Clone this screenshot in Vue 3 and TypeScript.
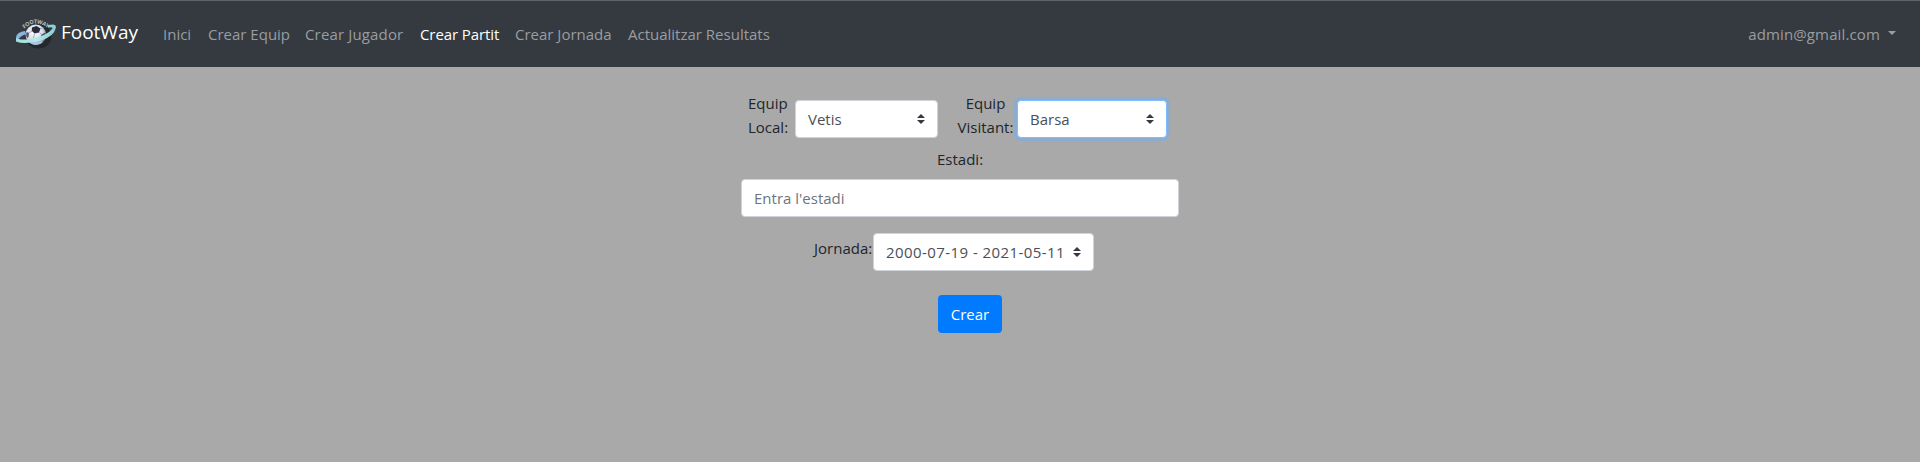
<script setup lang="ts">
import { ref } from 'vue'

interface NavItem {
  label: string
  key: string
  active?: boolean
}

const items: NavItem[] = [
  { label: 'Inici', key: 'inici' },
  { label: 'Crear Equip', key: 'equip' },
  { label: 'Crear Jugador', key: 'jugador' },
  { label: 'Crear Partit', key: 'partit', active: true },
  { label: 'Crear Jornada', key: 'jornada' },
  { label: 'Actualitzar Resultats', key: 'resultats' },
]
const local = ref('Vetis')
const visitant = ref('Barsa')
const jornada = ref('2000-07-19 - 2021-05-11')
const estadi = ref('')
</script>

<template>
  <div class="page">
    <nav class="navbar">
      <a class="brand">
        <svg class="logo" width="40" height="34" viewBox="0 0 40 34">
          <defs>
            <radialGradient id="ball" cx="42%" cy="38%" r="65%">
              <stop offset="0" stop-color="#ffffff" />
              <stop offset=".65" stop-color="#d4d9e8" />
              <stop offset="1" stop-color="#6f7a9b" />
            </radialGradient>
            <linearGradient id="ring" x1="0" x2="1">
              <stop offset="0" stop-color="#9fdde2" />
              <stop offset=".5" stop-color="#b4e9e6" />
              <stop offset="1" stop-color="#83cdd3" />
            </linearGradient>
            <path id="arc" d="M8.500 13Q19 2 32 12.500" />
          </defs>
          <ellipse cx="22.500" cy="20.500" rx="13" ry="12" fill="#25282b" />
          <path d="M9 15Q1 16 0 21L1 25Q4 20 10 18Z" fill="#8ab5de" />
          <circle cx="19.800" cy="18.800" r="10.300" fill="url(#ball)" />
          <path d="M16 11.500l4.500-1.500 4 2.500-1.500 4-4.500 1-2.800-2.700z" fill="#292c38" />
          <path d="M10.500 16l2.500 1-.5 4-1.500 1q-1.500-3-.5-6zM25.500 18.500l4-2q1 3-.5 5.500l-2.500 1-2-2z" fill="#4d5265" />
          <path d="M12.500 17l3.500-2M18.500 17.500l-1 4.500M23.500 16.500l2 2M24.500 12.500l3-.5" stroke="#8e94aa" stroke-width=".8" fill="none" />
          <path d="M32 9.500Q40 7 40 11.500 38 20.500 25 24.500 8 29 0 25.500L0 21.500Q3 24.500 14 23 31 20 36.500 12.500Q37 10.500 32 11.500Z" fill="url(#ring)" />
          <path d="M15 26.500Q20 29.500 26 26" fill="none" stroke="#a9c8ef" stroke-width="2" />
          <text class="logo-text"><textPath href="#arc" textLength="26">FOOTWAY</textPath></text>
        </svg>
        <span class="brand-name">FootWay</span>
      </a>
      <ul class="nav">
        <li v-for="item in items" :key="item.key" :class="['nav-item', item.key, { active: item.active }]">{{ item.label }}</li>
      </ul>
      <a class="user"><span class="mail">admin@gmail.com</span><i class="caret"></i></a>
    </nav>

    <form class="form" @submit.prevent>
      <div class="row teams">
        <label class="label-local">Equip<br />Local:</label>
        <div class="select select-local">
          <span>{{ local }}</span>
          <svg class="arrows" width="8" height="10" viewBox="0 0 4 5"><path d="M2 0L0 2h4zm0 5L0 3h4z" /></svg>
        </div>
        <label class="label-visitant">Equip<br />Visitant:</label>
        <div class="select select-visitant focused">
          <span>{{ visitant }}</span>
          <svg class="arrows" width="8" height="10" viewBox="0 0 4 5"><path d="M2 0L0 2h4zm0 5L0 3h4z" /></svg>
        </div>
      </div>
      <label class="label-estadi">Estadi:</label>
      <input v-model="estadi" class="input" type="text" placeholder="Entra l'estadi" />
      <div class="row jornada-row">
        <label class="label-jornada">Jornada:</label>
        <div class="select select-jornada">
          <span class="dates">{{ jornada }}</span>
          <svg class="arrows" width="8" height="10" viewBox="0 0 4 5"><path d="M2 0L0 2h4zm0 5L0 3h4z" /></svg>
        </div>
      </div>
      <button class="submit" type="submit">Crear</button>
    </form>
  </div>
</template>

<style>
body {
  margin: 0;
  background: #a9a9a9;
}
</style>

<style scoped>
.page,
.page * {
  box-sizing: border-box;
}
.page {
  height: 462px;
  overflow: hidden;
  background: #a9a9a9;
  color: #212529;
  font: 15px/24px "Open Sans", "Noto Sans", sans-serif;
}
.navbar {
  display: flex;
  align-items: center;
  height: 67px;
  padding: 0 24px 1px 16px;
  background: #343a40;
  border-top: 1px solid #606468;
  color: #9a9da0;
}
.brand {
  display: flex;
  align-items: center;
  width: 139px;
  color: #fff;
}
.logo {
  display: block;
  margin: -2px 6px 0 0;
}
.logo-text {
  font: bold 5.500px "Open Sans", sans-serif;
  fill: #b9bec1;
}
.brand-name {
  font-size: 19px;
  line-height: 30px;
  letter-spacing: -0.02px;
  margin: -3px 0 0 -1px;
}
.nav {
  display: flex;
  list-style: none;
  margin: 0;
  padding: 0;
}
.nav-item {
  padding: 0 8px;
  white-space: nowrap;
}
.nav-item.active {
  color: #fff;
}
.inici { width: 45px; }
.equip { width: 97px; }
.jugador { width: 115px; letter-spacing: 0.15px; }
.partit { width: 95px; letter-spacing: -0.1px; }
.jornada { width: 113px; }
.user {
  display: flex;
  align-items: center;
  margin-left: auto;
}
.mail {
  letter-spacing: 0.13px;
}
.caret {
  margin: 0 0 1px 8px;
  border-top: 4.5px solid currentColor;
  border-left: 4.5px solid transparent;
  border-right: 4.5px solid transparent;
}
.form {
  display: flex;
  flex-direction: column;
  width: 438px;
  margin: 24px 0 0 741px;
}
.row {
  display: flex;
}
.teams {
  height: 56px;
}
.label-local {
  width: 54px;
  padding-left: 7px;
}
.label-visitant {
  width: 79px;
  padding-left: 19px;
  padding-right: 3px;
  text-align: center;
  white-space: nowrap;
}
.select {
  display: flex;
  align-items: center;
  justify-content: space-between;
  height: 38px;
  padding: 0 12px;
  border: 1px solid #ced4da;
  border-radius: 4px;
  background: #fff;
  color: #495057;
  white-space: nowrap;
}
.teams .select {
  margin-top: 9px;
}
.select-local { width: 143px; }
.select-visitant { width: 150px; }
.select-jornada { width: 221px; }
.dates {
  letter-spacing: 0.43px;
}
.focused {
  border-color: #80bdff;
  box-shadow: 0 0 0 3px rgba(128, 174, 224, 0.7);
}
.arrows {
  fill: #343a40;
}
.label-estadi {
  padding-left: 196px;
}
.input {
  height: 38px;
  margin: 8px 0 16px;
  padding: 0 12px;
  border: 1px solid #ced4da;
  border-radius: 4px;
  background: #fff;
  font: inherit;
  outline: none;
}
.input::placeholder {
  color: #6c757d;
  opacity: 1;
}
.label-jornada {
  width: 132px;
  margin-top: 3px;
  padding-left: 73px;
  white-space: nowrap;
}
.submit {
  width: 64px;
  height: 38px;
  margin: 24px 0 0 197px;
  padding: 0;
  border: 0;
  border-radius: 4px;
  background: #007bff;
  color: #fff;
  font: inherit;
}
</style>
